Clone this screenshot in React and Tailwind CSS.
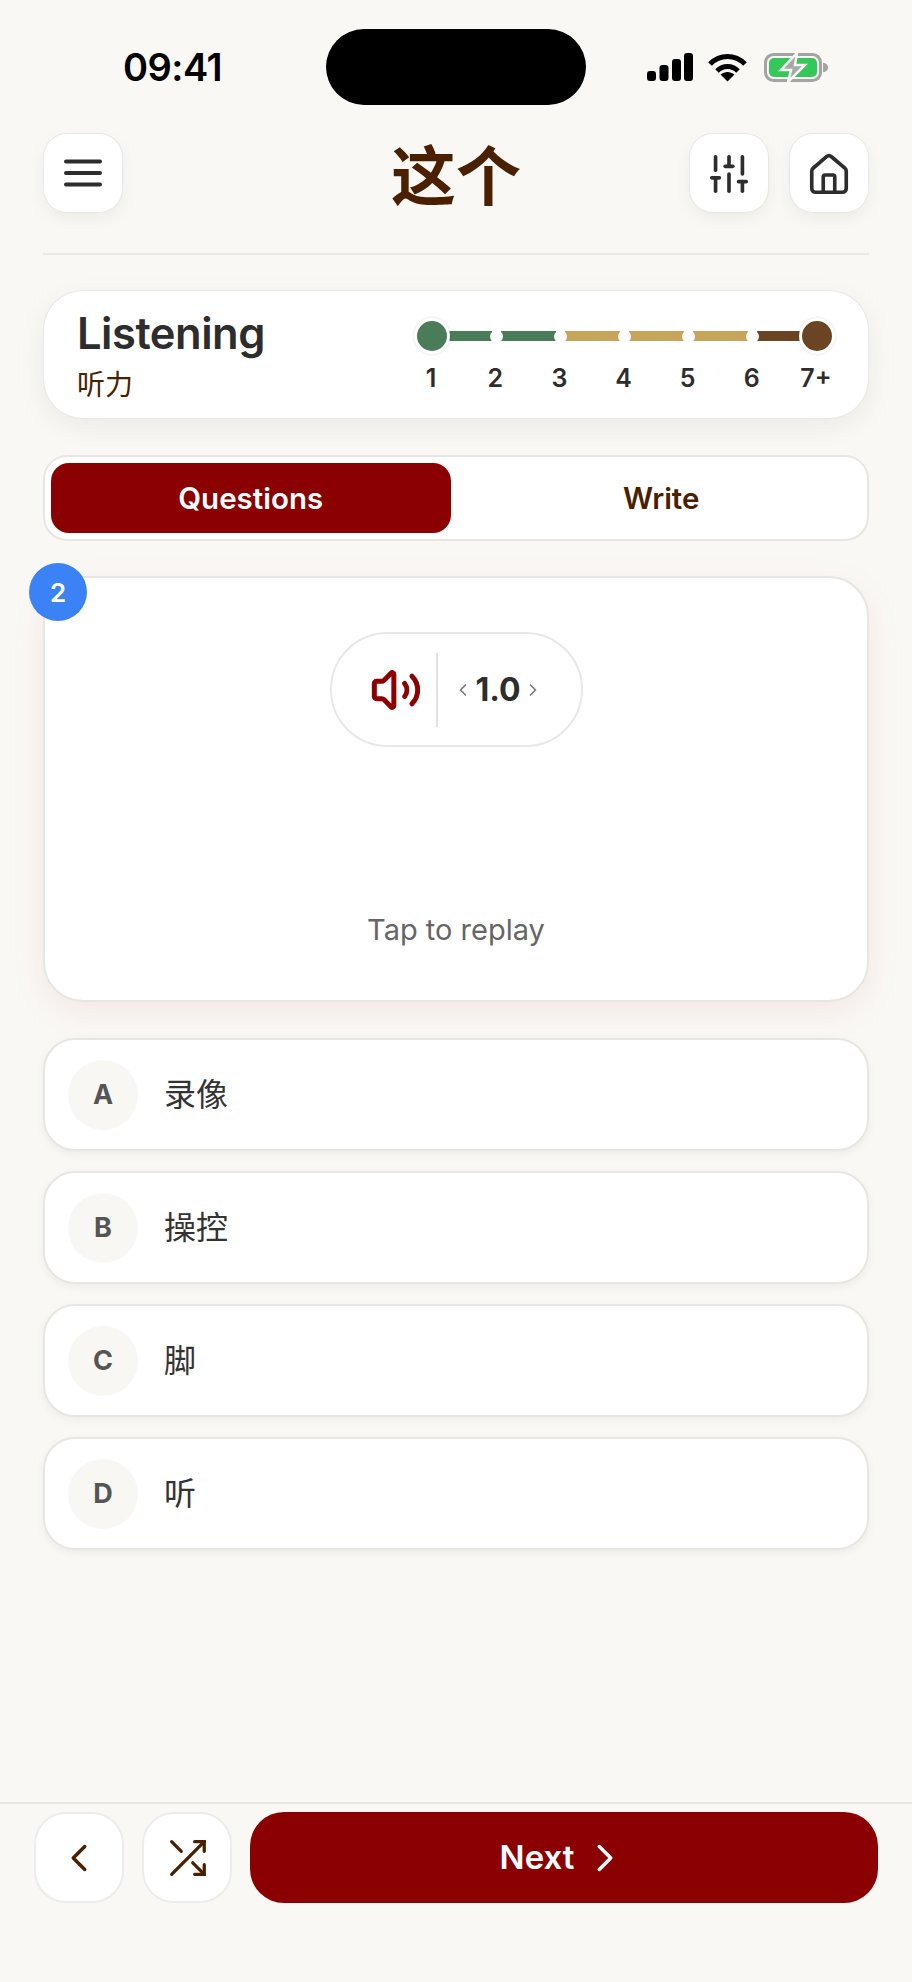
import { ChevronLeft, ChevronRight, House, SlidersVertical, Volume2 } from 'lucide-react';

const options = [
  { letter: 'A', text: '录像' },
  { letter: 'B', text: '操控' },
  { letter: 'C', text: '脚' },
  { letter: 'D', text: '听' },
];

const levels = ['1', '2', '3', '4', '5', '6', '7+'];

function StatusIcons() {
  return (
    <div className="flex items-center">
      <svg width="46" height="28" viewBox="0 0 46 28" fill="#000">
        <rect x="0" y="18" width="9" height="10" rx="3" />
        <rect x="12.500" y="12" width="9" height="16" rx="3" />
        <rect x="25" y="6" width="9" height="22" rx="3" />
        <rect x="37" y="0" width="9" height="28" rx="3" />
      </svg>
      <svg className="ml-[15px]" width="39" height="29" viewBox="0 0 39 29" fill="none" stroke="#000" strokeWidth="5">
        <path d="M2 11 C12 1 27 1 37 11" />
        <path d="M9 18 C15 12 24 12 30 18" />
        <path d="M12.500 21.500 L19.500 28.500 L26.500 21.500 C22 18 17 18 12.500 21.500 Z" fill="#000" stroke="none" />
      </svg>
      <svg className="ml-[17px]" width="64" height="29" viewBox="0 0 64 29" fill="none">
        <rect x="1.500" y="1.500" width="55" height="26" rx="8" stroke="#a3a3a3" strokeWidth="3" />
        <rect x="5" y="5" width="48" height="19" rx="5" fill="#34c759" />
        <path d="M59 10 C62 10 64 12 64 14.500 C64 17 62 19 59 19 Z" fill="#a3a3a3" />
        <path d="M33 0 L17 17 H27 L24 29 L41 12 H31 Z" fill="#a8a8a8" stroke="#faf8f5" strokeWidth="2.500" />
      </svg>
    </div>
  );
}

function IconButton({ children }) {
  return (
    <button className="flex h-20 w-20 items-center justify-center rounded-[24px] border border-[#e9e7e3] bg-white text-[#2d2d2d] shadow-[0_6px_16px_rgba(0,0,0,0.05)]">
      {children}
    </button>
  );
}

function TrackDot() {
  return <span className="z-10 -mx-[2px] h-[13px] w-[13px] rounded-full bg-white" />;
}

function LevelTrack() {
  return (
    <div className="flex flex-col">
      <div className="flex items-center px-[1px]">
        <span className="z-10 h-[36px] w-[36px] rounded-full border-[3px] border-white bg-[#4a7c59] shadow-[0_0_3px_rgba(0,0,0,0.15)]" />
        <span className="-ml-[2px] h-[10px] w-[44px] bg-[#4a7c59]" />
        <TrackDot />
        <span className="h-[10px] w-[55px] bg-[#4a7c59]" />
        <TrackDot />
        <span className="h-[10px] w-[55px] bg-[#c9a55c]" />
        <TrackDot />
        <span className="h-[10px] w-[55px] bg-[#c9a55c]" />
        <TrackDot />
        <span className="h-[10px] w-[55px] bg-[#c9a55c]" />
        <TrackDot />
        <span className="-mr-[2px] h-[10px] w-[44px] bg-[#6b4423]" />
        <span className="z-10 h-[36px] w-[36px] rounded-full border-[3px] border-white bg-[#6b4423] shadow-[0_0_3px_rgba(0,0,0,0.15)]" />
      </div>
      <div className="mt-[7px] -ml-[14px] flex w-[449px]">
        {levels.map((level) => (
          <span key={level} className="flex-1 text-center text-[25px] leading-[34px] font-semibold text-[#2d2d2d]">
            {level}
          </span>
        ))}
      </div>
    </div>
  );
}

export default function App() {
  return (
    <div className="flex h-[1982px] w-[912px] flex-col bg-[#faf8f5] font-['Inter','Noto_Sans_CJK_SC',sans-serif]">
      {/* Status bar */}
      <div className="mt-[29px] flex h-[76px] items-center pl-[123px]">
        <span className="w-[203px] text-[38px] leading-none font-semibold tracking-[-0.5px] text-black">09:41</span>
        <div className="h-[76px] w-[260px] rounded-[38px] bg-black" />
        <div className="ml-[61px]">
          <StatusIcons />
        </div>
      </div>

      {/* Header */}
      <header className="mx-[43px] mt-[28px] grid h-20 grid-cols-3 items-center">
        <IconButton>
          <svg width="38" height="28" viewBox="0 0 38 28" stroke="#2d2d2d" strokeWidth="4" strokeLinecap="round">
            <path d="M2 2.500H36M2 14H36M2 25.500H36" />
          </svg>
        </IconButton>
        <h1 className="pt-[6px] text-center text-[65px] leading-none font-bold text-[#4a2000]">这个</h1>
        <div className="flex justify-end gap-5">
          <IconButton>
            <SlidersVertical className="mt-[2px]" size={46} strokeWidth={1.9} />
          </IconButton>
          <IconButton>
            <House className="mt-[3px]" size={46} strokeWidth={1.9} />
          </IconButton>
        </div>
      </header>
      <div className="mx-[43px] mt-10 h-[2px] shrink-0 bg-[#eae8e4]" />

      {/* Listening level */}
      <section className="mx-[43px] mt-[35px] flex h-[129px] shrink-0 items-start justify-between rounded-[40px] border border-[#e9e7e3] bg-white pr-[20px] pl-[33px] shadow-[0_8px_28px_rgba(0,0,0,0.06)]">
        <div className="pt-[15px]">
          <p className="text-[43.500px] leading-[54px] font-semibold tracking-[-0.5px] text-[#2d2d2d]">Listening</p>
          <p className="mt-[8px] text-[28px] leading-[34px] text-[#4a2000]">听力</p>
        </div>
        <div className="pt-[27px]">
          <LevelTrack />
        </div>
      </section>

      {/* Tabs */}
      <div className="mx-[43px] mt-9 flex h-[86px] shrink-0 gap-[11px] rounded-[24px] border-2 border-[#e8e6e2] bg-white p-[6px]">
        <button className="flex-1 rounded-[18px] bg-[#8b0000] text-[29.500px] font-semibold text-white">Questions</button>
        <button className="flex-1 rounded-[18px] text-[29.500px] font-semibold text-[#4a2000]">Write</button>
      </div>

      {/* Question card */}
      <section className="relative mx-[43px] mt-[35px] flex h-[426px] shrink-0 flex-col items-center rounded-[40px] border-2 border-[#e8e6e2] bg-white pt-[54px] shadow-[0_10px_36px_rgba(139,0,0,0.07)]">
        <span className="absolute -top-[15px] -left-[16px] flex h-[58px] w-[58px] items-center justify-center rounded-full bg-[#3b82f6] text-[26px] font-semibold text-white">
          2
        </span>
        <div className="flex h-[115px] w-[253px] items-center rounded-full border-2 border-[#e8e8e6] bg-white">
          <Volume2 className="ml-[38px] text-[#8b0000]" size={52} strokeWidth={2.300} />
          <span className="ml-[14px] h-[74px] w-[2px] bg-[#e2e2e0]" />
          <ChevronLeft className="ml-[15px] text-[#777]" size={20} strokeWidth={2} />
          <span className="ml-[3px] text-[32px] font-bold text-[#2d2d2d]">1.0</span>
          <ChevronRight className="ml-[2px] text-[#777]" size={20} strokeWidth={2} />
        </div>
        <p className="mt-[166px] text-[29px] leading-[34px] text-[#666]">Tap to replay</p>
      </section>

      {/* Answers */}
      <div className="mx-[43px] mt-9 flex flex-col gap-5">
        {options.map(({ letter, text }) => (
          <button
            key={letter}
            className="flex h-[113px] items-center rounded-[32px] border-2 border-[#e8e6e2] bg-white pl-[23px] shadow-[0_3px_10px_rgba(0,0,0,0.05)]"
          >
            <span className="flex h-[70px] w-[70px] items-center justify-center rounded-full bg-[#f8f7f4] pt-[1px] text-[27px] font-bold text-[#555]">
              {letter}
            </span>
            <span className="ml-[26px] text-[32px] text-[#333]">{text}</span>
          </button>
        ))}
      </div>

      {/* Bottom bar */}
      <div className="flex-1" />
      <footer className="flex h-[180px] shrink-0 gap-[18px] border-t-2 border-[#e8e6e2] px-[34px] pt-[8px]">
        <button className="flex h-[91px] w-[90px] items-center justify-center rounded-[32px] border-2 border-[#ececea] bg-white text-[#4a2000]">
          <ChevronLeft size={46} strokeWidth={1.8} />
        </button>
        <button className="flex h-[91px] w-[90px] items-center justify-center rounded-[32px] border-2 border-[#ececea] bg-white">
          <svg width="46" height="46" viewBox="0 0 24 24" fill="none" stroke="#4a2000" strokeWidth="1.700" strokeLinecap="round">
            <path d="M16 3.500H21V8.500" />
            <path d="M4 20.500L21 3.500" />
            <path d="M21 15.500V20.500H16" />
            <path d="M15 14.500L21 20.500" />
            <path d="M4 3.500L9 8.500" />
          </svg>
        </button>
        <button className="flex h-[91px] flex-1 items-center justify-center gap-[14px] rounded-[34px] bg-[#8b0000] text-[33px] font-semibold text-white">
          Next
          <ChevronRight size={46} strokeWidth={1.8} className="-ml-[6px]" />
        </button>
      </footer>
    </div>
  );
}
